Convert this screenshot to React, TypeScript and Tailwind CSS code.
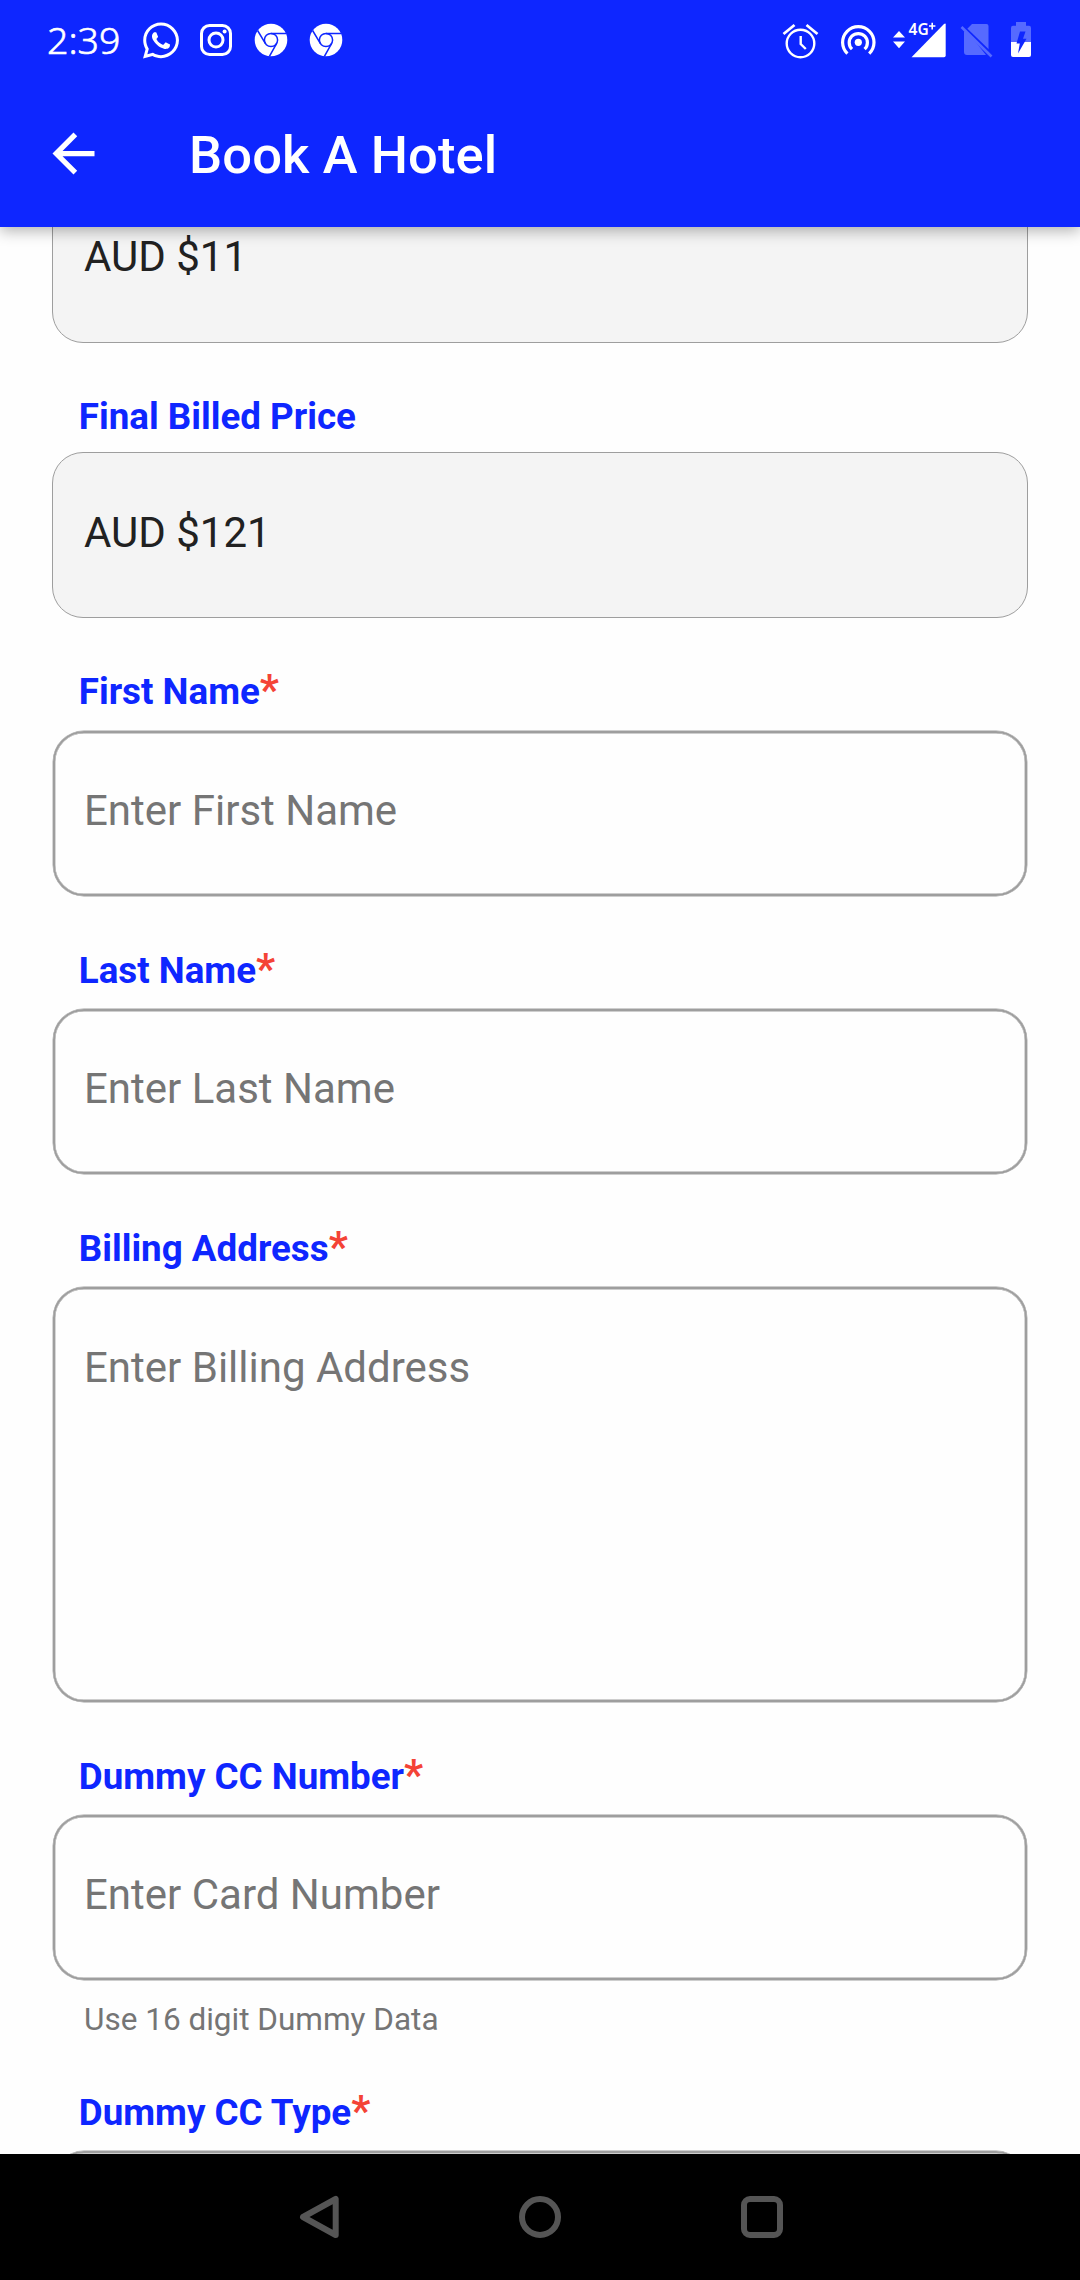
import React from "react";
import { FaWhatsapp } from "react-icons/fa";

function Chrome() {
  return (
    <svg width="34" height="34" viewBox="0 0 34 34" className="shrink-0">
      <circle cx="17" cy="17" r="16.3" fill="#fff" />
      <g fill="none" stroke="#0e26ff" strokeWidth="1.5">
        <circle cx="17" cy="17" r="6.6" />
        <path d="M17 10.4H32.5M11.3 20.3L3.6 7.5M22.7 20.3L15.4 33.4" />
      </g>
    </svg>
  );
}

function StatusBar() {
  return (
    <div className="flex h-20 items-center pl-[47px] font-['Noto_Sans']">
      <span className="w-[96px] text-[37.5px] leading-[80px] font-light [-webkit-text-stroke:0.6px_white]">2:39</span>
      <FaWhatsapp className="h-[41px] w-[36px] shrink-0" />
      <svg width="34" height="34" viewBox="0 0 34 34" className="ml-5 shrink-0" fill="none" stroke="#fff" strokeWidth="3">
        <rect x="2.5" y="2.5" width="29" height="29" rx="8" />
        <circle cx="17" cy="17" r="7" />
        <circle cx="25.6" cy="8.6" r="2" fill="#fff" stroke="none" />
      </svg>
      <div className="ml-[21px] flex gap-[21px]">
        <Chrome />
        <Chrome />
      </div>
      <svg width="250" height="60" viewBox="782 10 250 60" className="ml-[439px] shrink-0" fill="none" stroke="#fff">
        <g strokeWidth="2.4">
          <circle cx="800.5" cy="43.5" r="13.8" />
          <path d="M783.5 34L794.5 25M806.5 25L817.5 34" strokeWidth="2.8" />
          <path d="M800.7 36V44L805.8 49" />
        </g>
        <circle cx="858.3" cy="42.3" r="3.6" fill="#fff" stroke="none" />
        <path d="M852 49.2A9.1 9.1 0 1 1 864.6 49.2M847.4 53.6A15.7 15.7 0 1 1 869.2 53.6" strokeWidth="3.2" />
        <g fill="#fff" stroke="none">
          <path d="M893 37.6L899 31L905 37.6ZM893 41.6H905L899 48.2Z" />
          <path d="M911.5 57.2L944 24Q945.7 22.6 945.7 24.5V55.5Q945.7 57.2 944 57.2Z" />
          <text x="908.6" y="35" fontSize="15.5" fontWeight="600" fontFamily="Noto Sans">4G</text>
          <path d="M929 26H935.4M932.2 22.8V29.4" stroke="#fff" strokeWidth="1.6" />
          <path d="M965 28.5L988.5 51.5V26Q988.5 24 986.5 24H972L967.5 28.5L964 31.8V52Q964 55 967 55H986Z" fill="#566aff" />
        </g>
        <path d="M962.5 25.5L992 54" stroke="#0e26ff" strokeWidth="2.4" />
        <path d="M961.5 27L991.5 56.5" stroke="#566aff" strokeWidth="2.6" />
        <path d="M1011 42V28Q1011 25.7 1013 25.7H1016V22H1026V25.7H1029Q1031 25.7 1031 28V42Z" fill="#566aff" stroke="none" />
        <path d="M1011 42H1031V55Q1031 57 1029 57H1013Q1011 57 1011 55Z" fill="#fff" stroke="none" />
        <path d="M1020 31.5H1025.5L1023 38.7H1026.5L1018 53.5L1019.8 43.5H1016.5Z" fill="#0e26ff" stroke="none" />
      </svg>
    </div>
  );
}

function Label({ text, required = true, className }: { text: string; required?: boolean; className: string }) {
  return (
    <div className={`ml-[78.75px] text-[36.75px] leading-[44px] font-bold whitespace-nowrap text-[#0e26ff] ${className}`}>
      {text}
      {required && <span className="text-[42px] leading-[0] font-bold text-[#f44336]">*</span>}
    </div>
  );
}

function Field({ hint, className = "h-[165px] pt-[53px]" }: { hint: string; className?: string }) {
  return (
    <div className={`mx-[53px] shrink-0 rounded-[31px] border-2 border-[#9e9e9e] pl-[29px] text-[42px] leading-[50px] text-[#757575] shadow-[0_0_0_0.4px_#9e9e9e,inset_0_0_0_0.4px_#9e9e9e] ${className}`}>
      {hint}
    </div>
  );
}

function PriceBox({ value, className }: { value: string; className: string }) {
  return (
    <div className={`mx-[52px] h-[166px] shrink-0 rounded-[31px] border border-[#9e9e9e] bg-[#f4f4f4] pl-[31px] text-[42px] leading-[50px] text-[#212121] ${className}`}>
      {value}
    </div>
  );
}

export default function App() {
  return (
    <div className="flex h-[2280px] w-[1080px] flex-col overflow-hidden bg-white font-[Roboto]">
      <header className="z-10 h-[227px] shrink-0 bg-[#0e26ff] text-white shadow-[0_4px_14px_rgba(0,0,0,0.3)]">
        <StatusBar />
        <div className="flex h-[147px] items-center pl-[42px]">
          <svg width="63" height="63" viewBox="0 0 24 24" fill="#fff" className="shrink-0">
            <path d="M20 11H7.83l5.59-5.59L12 4l-8 8 8 8 1.41-1.41L7.83 13H20z" />
          </svg>
          <h1 className="mt-[2px] ml-[84px] text-[52.5px] leading-[62px] font-medium tracking-[0.1px]">Book A Hotel</h1>
        </div>
      </header>

      <main className="flex h-[1927px] shrink-0 flex-col overflow-hidden bg-[#fefefe]">
        <PriceBox value="AUD $11" className="-mt-[50px] pt-[54px]" />
        <Label text="Final Billed Price" required={false} className="mt-[52px] mb-[13px]" />
        <PriceBox value="AUD $121" className="pt-[55px]" />
        <Label text="First Name" className="mt-[52px] mb-[17px]" />
        <Field hint="Enter First Name" />
        <Label text="Last Name" className="mt-[53px] mb-[16px]" />
        <Field hint="Enter Last Name" />
        <Label text="Billing Address" className="mt-[53px] mb-[16px]" />
        <Field hint="Enter Billing Address" className="h-[415px] pt-[54px]" />
        <Label text="Dummy CC Number" className="mt-[53px] mb-[16px]" />
        <Field hint="Enter Card Number" />
        <p className="mt-[21px] ml-[84px] text-[31.5px] leading-[38px] text-[#757575]">Use 16 digit Dummy Data</p>
        <Label text="Dummy CC Type" className="mt-[52px] mb-[16px]" />
        <Field hint="" />
      </main>

      <nav className="flex h-[126px] shrink-0 items-center justify-center gap-[180px] bg-black">
        <svg width="42" height="44" viewBox="0 0 42 44" fill="none" stroke="#555" strokeWidth="6" strokeLinejoin="round">
          <path d="M38.7 4V40L6 22Z" />
        </svg>
        <svg width="42" height="44" viewBox="0 0 42 44" fill="none" stroke="#555" strokeWidth="6">
          <circle cx="21" cy="22" r="18" />
        </svg>
        <svg width="42" height="44" viewBox="0 0 42 44" fill="none" stroke="#555" strokeWidth="6">
          <rect x="3" y="4" width="36" height="36" rx="6" />
        </svg>
      </nav>
    </div>
  );
}
